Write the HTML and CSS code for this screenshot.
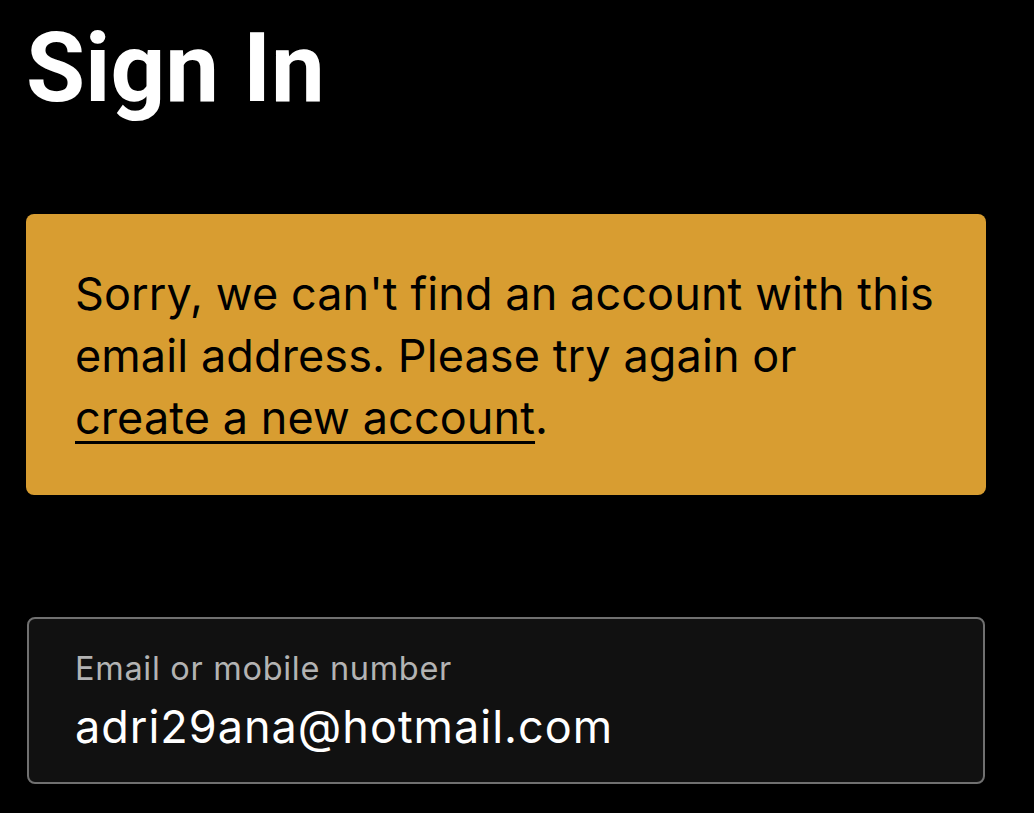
FILE: index.html
```html
<!DOCTYPE html>
<html lang="en">
<head>
<meta charset="utf-8">
<title>Sign In</title>
<link rel="stylesheet" href="styles.css">
</head>
<body>
  <main class="signin">
    <h1 class="signin-title">Sign In</h1>
    <div class="alert" role="alert">
      <p class="alert-text">Sorry, we can't find an account with this email address. Please try again or <a class="alert-link" href="#">create a new account</a>.</p>
    </div>
    <label class="field">
      <span class="field-label">Email or mobile number</span>
      <span class="field-value">adri29ana@hotmail.com</span>
    </label>
  </main>
</body>
</html>
```

FILE: styles.css
```css
html, body {
  margin: 0;
  padding: 0;
  background: #000;
}

.signin {
  display: flex;
  flex-direction: column;
  width: 960px;
  padding: 20px 0 0 26px;
  font-family: "Inter", "Noto Sans", sans-serif;
}

.signin-title {
  margin: 0;
  font-family: "Roboto", "Liberation Sans", sans-serif;
  font-weight: 700;
  font-size: 96px;
  line-height: 96px;
  color: #fff;
}

.alert {
  margin-top: 98px;
  padding: 49px 48px 46px 49px;
  background: #d89d31;
  border-radius: 8px;
}

.alert-text {
  margin: 0;
  font-size: 45px;
  line-height: 62px;
  letter-spacing: 0.1px;
  color: #000;
}

.alert-link {
  color: #000;
  text-decoration: underline;
  text-decoration-thickness: 3px;
  text-underline-offset: 7px;
}

.field {
  display: flex;
  flex-direction: column;
  gap: 11px;
  margin-top: 122px;
  margin-left: 1px;
  width: 958px;
  padding: 29px 46px 28px 46px;
  box-sizing: border-box;
  background: #111;
  border: 2px solid #707070;
  border-radius: 8px;
}

.field-label {
  font-size: 32.5px;
  line-height: 41px;
  letter-spacing: 0.7px;
  color: #b3b3b3;
}

.field-value {
  font-size: 45px;
  line-height: 54px;
  letter-spacing: 1px;
  color: #fff;
}
```
